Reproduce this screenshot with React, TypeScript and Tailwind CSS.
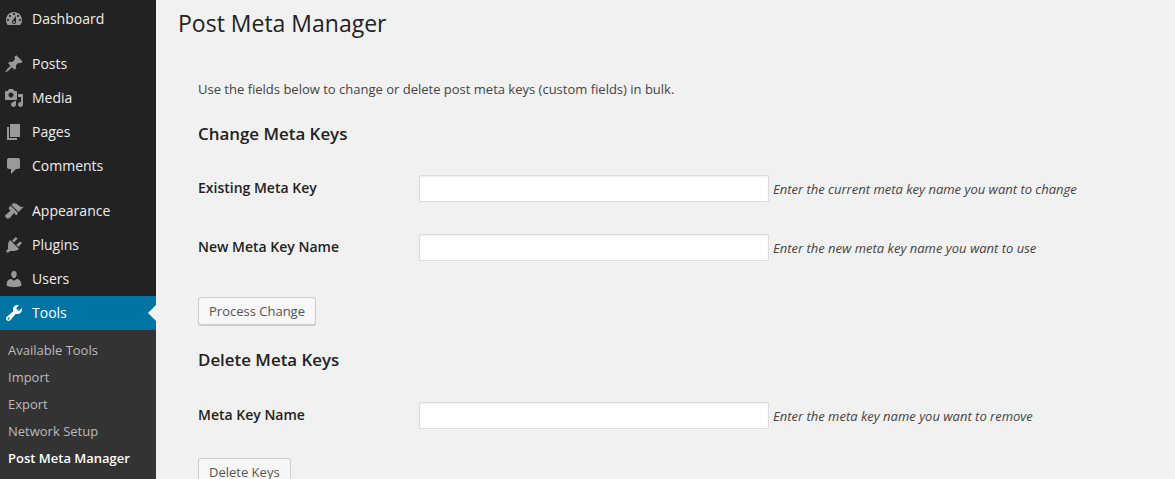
import React from 'react';

const ICONS: Record<string, string> = {
  dashboard: 'M3.76 16h12.48c1.1-1.37 1.76-3.11 1.76-5 0-4.42-3.58-8-8-8s-8 3.58-8 8c0 1.89.66 3.63 1.76 5zM10 4c.55 0 1 .45 1 1s-.45 1-1 1-1-.45-1-1 .45-1 1-1zM6 6c.55 0 1 .45 1 1s-.45 1-1 1-1-.45-1-1 .45-1 1-1zm8 0c.55 0 1 .45 1 1s-.45 1-1 1-1-.45-1-1 .45-1 1-1zm-5.37 5.55L12 7v6c0 1.1-.9 2-2 2s-2-.9-2-2c0-.57.24-1.08.63-1.45zM4 10c.55 0 1 .45 1 1s-.45 1-1 1-1-.45-1-1 .45-1 1-1zm12 0c.55 0 1 .45 1 1s-.45 1-1 1-1-.45-1-1 .45-1 1-1zm-5 3c0-.55-.45-1-1-1s-1 .45-1 1 .45 1 1 1 1-.45 1-1z',
  posts: 'M10.44 3.02l1.82-1.82 6.36 6.35-1.83 1.82c-1.05-.68-2.48-.57-3.41.36l-.75.75c-.92.93-1.04 2.35-.35 3.41l-1.83 1.82-2.41-2.41-2.8 2.79c-.42.42-3.38 2.71-3.8 2.29s1.86-3.39 2.28-3.81l2.79-2.79L4.1 9.36l1.83-1.82c1.05.69 2.48.57 3.4-.36l.75-.75c.93-.92 1.05-2.35.36-3.41z',
  media: 'M13 11V4c0-.55-.45-1-1-1h-1.67L9 1H5L3.67 3H2c-.55 0-1 .45-1 1v7c0 .55.45 1 1 1h10c.55 0 1-.45 1-1zM7 4.5c1.38 0 2.5 1.12 2.5 2.5S8.38 9.5 7 9.5 4.5 8.38 4.5 7 5.62 4.5 7 4.5zM14 6h5v10.5c0 1.38-1.12 2.5-2.5 2.5S14 17.88 14 16.5s1.12-2.5 2.5-2.5c.17 0 .34.02.5.05V9h-3V6zm-4 8.05V13h2v3.5c0 1.38-1.12 2.5-2.5 2.5S7 17.88 7 16.5 8.12 14 9.5 14c.17 0 .34.02.5.05z',
  pages: 'M6 15V2h10v13H6zm-1 1h8v2H3V5h2v11z',
  comments: 'M5 2h9c1.1 0 2 .9 2 2v7c0 1.1-.9 2-2 2h-2l-5 5v-5H5c-1.1 0-2-.9-2-2V4c0-1.1.9-2 2-2z',
  appearance: 'M14.48 11.06L7.41 3.99l1.5-1.5c.5-.56 2.3-.47 3.51.32 1.21.8 1.43 1.28 2.91 2.1 1.18.64 2.45 1.26 4.45.85zm-.71.71L6.7 4.7 4.93 6.47c-.39.39-.39 1.02 0 1.41l1.06 1.06c.39.39.39 1.03 0 1.42-.6.6-1.43 1.11-2.21 1.69-.35.26-.7.53-1.01.84C1.43 13.23.4 14.91 1.72 16.23l.7.7c1.32 1.32 3 .29 4.34-1.05.31-.31.58-.66.84-1.01.58-.78 1.09-1.61 1.69-2.21.39-.39 1.03-.39 1.42 0l1.06 1.06c.39.39 1.02.39 1.41 0z',
  plugins: 'M13.11 4.36L9.87 7.6 8 5.73l3.24-3.24c.35-.34 1.05-.2 1.56.32.52.51.66 1.21.31 1.55zm-8 1.77l.91-1.12 9.01 9.01-1.19.84c-.71.71-2.63 1.16-3.82 1.16H6.14L4.9 17.26c-.59.59-1.54.59-2.12 0-.59-.58-.59-1.53 0-2.12l1.24-1.24v-3.88c0-1.13.4-3.19 1.09-3.89zm7.26 3.97l3.24-3.24c.34-.35 1.04-.21 1.55.31.52.51.66 1.21.31 1.55l-3.24 3.25z',
  users: 'M10 9.25c-2.27 0-2.73-3.44-2.73-3.44C7 4.02 7.82 2 9.97 2c2.16 0 2.98 2.02 2.71 3.81 0 0-.41 3.44-2.68 3.44zm0 2.57L12.72 10c2.39 0 4.52 2.33 4.52 4.53v2.49s-3.65 1.13-7.24 1.13c-3.65 0-7.24-1.13-7.24-1.13v-2.49c0-2.25 1.94-4.48 4.47-4.48z',
  tools: 'M16.68 9.77c-1.34 1.34-3.3 1.67-4.95.99l-5.41 6.52c-.99.99-2.59.99-3.58 0s-.99-2.59 0-3.57l6.52-5.42c-.68-1.65-.35-3.61.99-4.95 1.28-1.28 3.12-1.62 4.72-1.06l-2.89 2.89 2.82 2.82 2.86-2.87c.53 1.58.18 3.39-1.08 4.67zM3.81 16.21c.4.39 1.04.39 1.43 0 .4-.4.4-1.04 0-1.43-.39-.4-1.03-.4-1.43 0-.39.39-.39 1.03 0 1.43z',
};

function MenuItem({ icon, label, active }: { icon: string; label: string; active?: boolean }) {
  return (
    <div className={`relative flex h-[34px] items-center text-[14px] ${active ? 'bg-[#0074a2] text-white' : 'text-[#eeeeee]'}`}>
      <svg viewBox="0 0 20 20" className={`ml-[4px] h-[20px] w-[20px] ${active ? 'fill-white' : 'fill-[#999999]'}`}>
        <path d={ICONS[icon]} />
      </svg>
      <span className="ml-[8px] pb-[2px]">{label}</span>
      {active && (
        <div className="absolute right-0 top-[9px] h-0 w-0 border-y-[8px] border-r-[8px] border-y-transparent border-r-[#f1f1f1]" />
      )}
    </div>
  );
}

function SubItem({ label, current }: { label: string; current?: boolean }) {
  return (
    <div className={`flex h-[27px] items-center pl-[8px] text-[13px] ${current ? 'font-semibold text-white' : 'text-[#bbbbbb]'}`}>
      {label}
    </div>
  );
}

function FieldRow({ label, hint, className }: { label: string; hint: string; className: string }) {
  return (
    <div className={`flex h-[27px] items-center ${className}`}>
      <label className="w-[221px] pb-[2px] text-[14px] font-semibold text-[#222222]">{label}</label>
      <input className="h-[27px] w-[350px] border border-[#dddddd] bg-white shadow-[inset_0_1px_2px_rgba(0,0,0,0.07)]" />
      <span className="ml-[4px] pt-[2px] text-[13px] italic text-[#444444]">{hint}</span>
    </div>
  );
}

function WpButton({ label, className }: { label: string; className: string }) {
  return (
    <button className={`block h-[28px] rounded-[3px] border border-[#cccccc] bg-[#f7f7f7] px-[10px] pt-[1px] text-[13px] text-[#555555] shadow-[0_1px_0_#cccccc] ${className}`}>
      {label}
    </button>
  );
}

export default function App() {
  return (
    <div className="flex h-[479px] w-[1175px] overflow-hidden bg-[#f1f1f1] font-['Open_Sans',sans-serif]">
      <aside className="h-full w-[156px] shrink-0 bg-[#222222] pt-[2px]">
        <MenuItem icon="dashboard" label="Dashboard" />
        <div className="h-[11px]" />
        <MenuItem icon="posts" label="Posts" />
        <MenuItem icon="media" label="Media" />
        <MenuItem icon="pages" label="Pages" />
        <MenuItem icon="comments" label="Comments" />
        <div className="h-[11px]" />
        <MenuItem icon="appearance" label="Appearance" />
        <MenuItem icon="plugins" label="Plugins" />
        <MenuItem icon="users" label="Users" />
        <MenuItem icon="tools" label="Tools" active />
        <div className="h-full bg-[#333333] pt-[7px]">
          <SubItem label="Available Tools" />
          <SubItem label="Import" />
          <SubItem label="Export" />
          <SubItem label="Network Setup" />
          <SubItem label="Post Meta Manager" current />
        </div>
      </aside>

      <main className="min-w-0 flex-1 pl-[22px]">
        <h1 className="mt-[7px] text-[23px] leading-[32px] text-[#222222]">Post Meta Manager</h1>
        <div className="pl-[20px]">
          <p className="mt-[40px] text-[13px] leading-[20px] text-[#444444]">
            Use the fields below to change or delete post meta keys (custom fields) in bulk.
          </p>
          <h3 className="mt-[24px] text-[16.9px] font-semibold leading-[22px] text-[#222222]">Change Meta Keys</h3>
          <FieldRow className="mt-[30px]" label="Existing Meta Key" hint="Enter the current meta key name you want to change" />
          <FieldRow className="mt-[32px]" label="New Meta Key Name" hint="Enter the new meta key name you want to use" />
          <WpButton className="mt-[36px]" label="Process Change" />
          <h3 className="mt-[24px] text-[16.9px] font-semibold leading-[22px] text-[#222222]">Delete Meta Keys</h3>
          <FieldRow className="mt-[31px]" label="Meta Key Name" hint="Enter the meta key name you want to remove" />
          <WpButton className="mt-[29px]" label="Delete Keys" />
        </div>
      </main>
    </div>
  );
}
